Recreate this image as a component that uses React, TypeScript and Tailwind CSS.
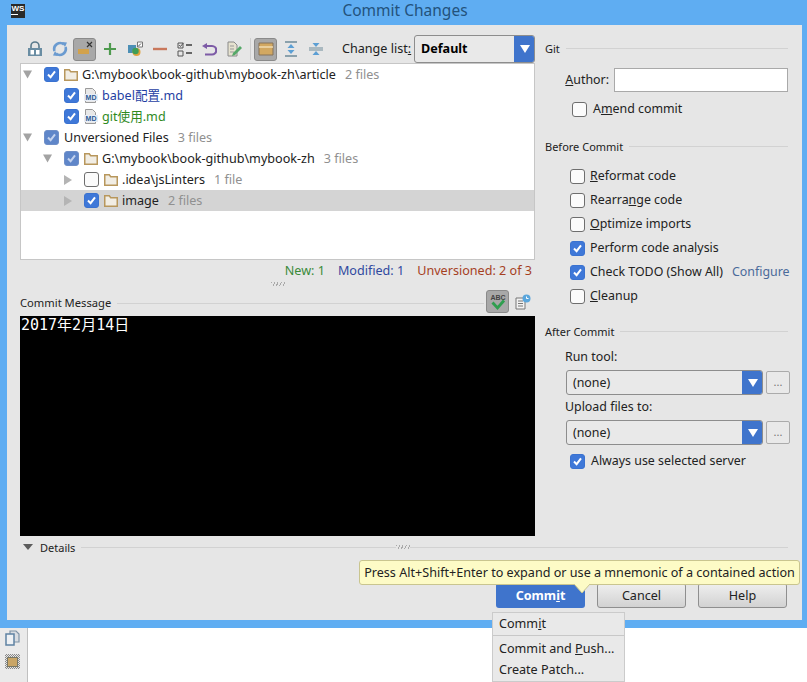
import React from 'react'

const Check = ({ on = false, muted = false }: { on?: boolean; muted?: boolean }) => (
  <span
    className={`flex h-[15px] w-[15px] shrink-0 items-center justify-center rounded-[3px] border ${
      on ? (muted ? 'border-[#6f8fc8] bg-[#5f86c9]' : 'border-[#3a72d0] bg-[#3f78d8]') : 'border-[#6e6e6e] bg-[#fbfbfb]'
    }`}
  >
    {on && (
      <svg width="11" height="11" viewBox="0 0 11 11">
        <path d="M2 5.5 L4.6 8.2 L9 2.4" fill="none" stroke={muted ? '#c3d2ee' : '#fff'} strokeWidth="2" />
      </svg>
    )}
  </span>
)

const Folder = () => (
  <svg width="14" height="12" viewBox="0 0 14 12" className="shrink-0">
    <path d="M.75 11.25V.75h4.5l1.5 2h6.5v8.5z" fill="#f1ede4" stroke="#b8975c" strokeWidth="1.5" />
  </svg>
)

const MdFile = () => (
  <svg width="14" height="16" viewBox="0 0 14 16" className="shrink-0">
    <path d="M1.5.5h7l3 3v11h-10z" fill="#e8e8e8" stroke="#9a9a9a" />
    <rect x="0" y="6" width="14" height="7" fill="#e6ecf5" />
    <text x="7" y="12.2" textAnchor="middle" fontSize="7" fontWeight="700" fill="#2c5a94" fontFamily="Liberation Sans">MD</text>
  </svg>
)

const Arrow = ({ dir }: { dir?: 'down' | 'right' }) => (
  <span className="flex w-[9px] shrink-0 justify-center">
    {dir === 'down' && (
      <svg width="10" height="9" viewBox="0 0 10 9"><path d="M0 0h10L5 9z" fill="#a3a3a3" /></svg>
    )}
    {dir === 'right' && (
      <svg width="8" height="10" viewBox="0 0 8 10"><path d="M0 0l8 5-8 5z" fill="#b4b4b4" /></svg>
    )}
  </span>
)

function TreeRow({
  depth,
  dir,
  on,
  muted,
  icon,
  label,
  labelClass = 'text-[#222]',
  count,
  selected,
}: {
  depth: number
  dir?: 'down' | 'right'
  on?: boolean
  muted?: boolean
  icon?: 'folder' | 'md'
  label: string
  labelClass?: string
  count?: string
  selected?: boolean
}) {
  const indent = ['pl-[2px]', 'pl-[22px]', 'pl-[42px]'][depth]
  return (
    <div className={`flex h-[21px] items-center ${indent} ${selected ? 'bg-[#d4d4d4]' : ''}`}>
      <Arrow dir={dir} />
      <span className="ml-[12px]">
        <Check on={on} muted={muted} />
      </span>
      {icon && <span className="ml-[5px] mr-[4px] flex w-[14px] justify-center">{icon === 'folder' ? <Folder /> : <MdFile />}</span>}
      <span className={`whitespace-nowrap pt-px ${icon ? '' : 'ml-[5px]'} ${labelClass}`}>{label}</span>
      {count && <span className="ml-[9px] whitespace-nowrap pt-px text-[#909090]">{count}</span>}
    </div>
  )
}

const Tool = ({ children, active }: { children: React.ReactNode; active?: boolean }) => (
  <span className="flex h-[28px] w-[25px] shrink-0 items-center justify-center">
    <span className={`flex h-[23px] w-[23px] items-center justify-center rounded-[3px] ${active ? 'border border-[#8a8a8a] bg-[#a8a8a8]' : ''}`}>
      {children}
    </span>
  </span>
)

const Combo = ({ label, bold, h }: { label: string; bold?: boolean; h: string }) => (
  <div className={`flex ${h} flex-1 overflow-hidden rounded-[3px] border border-[#8d8d8d] bg-[#e9e9e9]`}>
    <span className={`flex flex-1 items-center pl-[6px] ${bold ? 'font-bold text-black' : 'pt-px text-[#222]'}`}>{label}</span>
    <span className="-my-px -mr-px flex w-[21px] items-center justify-center rounded-r-[3px] bg-[#3f74cc]">
      <svg width="10" height="8" viewBox="0 0 10 8"><path d="M0 0h10L5 8z" fill="#fff" /></svg>
    </span>
  </div>
)

const Option = ({ on, children, extra }: { on?: boolean; children: React.ReactNode; extra?: React.ReactNode }) => (
  <div className="flex h-[24px] items-center pl-[25px]">
    <Check on={on} />
    <span className="ml-[5px] whitespace-nowrap text-[#222]">{children}</span>
    {extra}
  </div>
)

const GroupTitle = ({ children }: { children: React.ReactNode }) => (
  <div className="flex h-[16px] items-center gap-[6px] pr-[2px] text-[11px] text-[#222]">
    <span className="whitespace-nowrap">{children}</span>
    <span className="h-px flex-1 bg-[#d2d2d2]" />
  </div>
)

const DotsButton = () => (
  <span className="ml-[3px] flex h-[23px] w-[24px] items-center justify-center rounded-[2px] border border-[#ababab] bg-[#e9e9e9] pb-[2px] text-[11px] text-[#777]">
    ...
  </span>
)

const Grip = () => (
  <span className="h-[4px] w-[14px] bg-[repeating-linear-gradient(115deg,#a9a9a9_0_1px,transparent_1px_3px)]" />
)

const GrayButton = ({ children }: { children: React.ReactNode }) => (
  <span className="flex h-[25px] w-[89px] items-center justify-center rounded-[3px] border border-[#8f8f8f] bg-gradient-to-b from-[#efefef] to-[#d2d2d2] pt-px text-[#222]">
    {children}
  </span>
)

export default function App() {
  return (
    <div className="relative flex h-[682px] w-[807px] flex-col overflow-hidden bg-white font-['Noto_Sans','Noto_Sans_CJK_SC',sans-serif] text-[12.6px] leading-none">
      {/* 窗口 */}
      <div className="flex h-[628px] flex-col bg-[#5fadf2] pb-[8px] pl-[7px] pr-[5px]">
        <div className="flex h-[25px] shrink-0 items-center">
          <span className="mb-[4px] ml-[4px] flex h-[14px] w-[14px] flex-col items-center bg-[#2a2a2a] pt-[1px] font-['Liberation_Sans',sans-serif] text-[8px] font-bold text-white">
            WS
            <span className="mt-[1px] h-px w-[7px] self-start bg-white" />
          </span>
          <span className="flex-1 pb-[3px] pr-[17px] text-center text-[15.5px] text-[#23527c]">Commit Changes</span>
        </div>

        <div className="flex min-h-0 flex-1 flex-col bg-[#e6e6e6]">
          <div className="flex h-[511px] shrink-0 pl-[13px]">
            {/* 左侧 */}
            <div className="flex w-[515px] shrink-0 flex-col pt-[10px]">
              <div className="flex h-[28px] items-center pl-[2px]">
                <Tool>
                  <svg width="16" height="16" viewBox="0 0 16 16">
                    <path d="M4 7V5a4 4 0 018 0v2" fill="none" stroke="#5a7a8c" strokeWidth="1.6" />
                    <path d="M1 7h14v8H1z" fill="#6a8da3" />
                    <path d="M3.5 9h3.5v4.5H3.500zM9 9h3.500v4.500H9z" fill="#fff" />
                  </svg>
                </Tool>
                <Tool>
                  <svg width="16" height="16" viewBox="0 0 16 16">
                    <path d="M12 3.500A6 6 0 002.500 10M4 12.500A6 6 0 0013.500 6" fill="none" stroke="#6b9bd0" strokeWidth="2.600" />
                    <path d="M10 1l5 .5-2 4.500zM6 15l-5-.5 2-4.500z" fill="#6b9bd0" />
                  </svg>
                </Tool>
                <Tool active>
                  <svg width="18" height="18" viewBox="0 0 18 18">
                    <path d="M2 9h11v5H2z" fill="#d2a24c" />
                    <path d="M11 2l5 5M16 2l-5 5" stroke="#333" strokeWidth="1.200" />
                  </svg>
                </Tool>
                <Tool>
                  <svg width="14" height="14" viewBox="0 0 14 14"><path d="M7 1v12M1 7h12" stroke="#4e9a4e" strokeWidth="2.200" /></svg>
                </Tool>
                <Tool>
                  <svg width="16" height="16" viewBox="0 0 16 16">
                    <path d="M1 4h8v8H1z" fill="#4c8fb5" />
                    <circle cx="9.500" cy="11" r="4" fill="#e0a23c" />
                    <circle cx="8.500" cy="10" r="3.200" fill="#3f9e55" />
                    <path d="M10.500 1h5v5h-5z" fill="#fff" stroke="#777" />
                    <path d="M11 5.500l3-3" stroke="#555" />
                  </svg>
                </Tool>
                <Tool>
                  <svg width="14" height="4" viewBox="0 0 14 4"><path d="M0 2h14" stroke="#c9785c" strokeWidth="2.400" /></svg>
                </Tool>
                <Tool>
                  <svg width="15" height="15" viewBox="0 0 15 15">
                    <path d="M1 1h5v5H1zM1 9h5v5H1z" fill="none" stroke="#555" />
                    <path d="M2.200 3l1.300 1.500L6.500 .8" fill="none" stroke="#555" />
                    <path d="M9 3h6M9 11h6" stroke="#666" strokeWidth="2" />
                  </svg>
                </Tool>
                <Tool>
                  <svg width="15" height="13" viewBox="0 0 15 13">
                    <path d="M3 3h7a3.800 3.800 0 010 8.500H3" fill="none" stroke="#7d5ba6" strokeWidth="2.200" />
                    <path d="M0 3l5-3v6z" fill="#7d5ba6" />
                  </svg>
                </Tool>
                <Tool>
                  <svg width="15" height="16" viewBox="0 0 15 16">
                    <path d="M1 1h6l3 3v11H1z" fill="#e6e2cf" stroke="#8a8a8a" />
                    <path d="M3 5h4M3 8h4M3 11h4" stroke="#999" />
                    <path d="M6 12l7-7 2 2-7 7-3 1z" fill="#55a868" />
                  </svg>
                </Tool>
                <span className="ml-[3px] mr-[2px] h-[22px] w-px bg-[#cfcfcf]" />
                <Tool active>
                  <svg width="16" height="14" viewBox="0 0 16 14">
                    <path d="M1 1h14v12H1z" fill="#d2a861" stroke="#85735a" />
                    <path d="M1 5h14" stroke="#f0dcb2" strokeWidth="1.500" />
                  </svg>
                </Tool>
                <Tool>
                  <svg width="14" height="16" viewBox="0 0 14 16">
                    <path d="M1 1h12M1 15h12" stroke="#6e8b99" strokeWidth="1.500" />
                    <path d="M7 3l3.500 4h-7zM7 13l3.500-4h-7z" fill="#5c9fd4" />
                  </svg>
                </Tool>
                <Tool>
                  <svg width="14" height="16" viewBox="0 0 14 16">
                    <path d="M0 7h14M0 9h14" stroke="#6e8b99" />
                    <path d="M7 6l3.500-4h-7zM7 10l3.500 4h-7z" fill="#5c9fd4" />
                  </svg>
                </Tool>
                <span className="ml-[14px] w-[72px] whitespace-nowrap text-[#222]">
                  Change list<span className="underline">:</span>
                </span>
                <Combo label="Default" bold h="h-[28px]" />
              </div>

              <div className="h-[197px] shrink-0 border border-[#c6c6c6] bg-white">
                <TreeRow depth={0} dir="down" on icon="folder" label={'G:\\mybook\\book-github\\mybook-zh\\article'} count="2 files" />
                <TreeRow depth={1} on icon="md" label="babel配置.md" labelClass="text-[#1f3fa3]" />
                <TreeRow depth={1} on icon="md" label="git使用.md" labelClass="text-[#2f8a1e]" />
                <TreeRow depth={0} dir="down" on muted label="Unversioned Files" count="3 files" />
                <TreeRow depth={1} dir="down" on muted icon="folder" label={'G:\\mybook\\book-github\\mybook-zh'} count="3 files" />
                <TreeRow depth={2} dir="right" icon="folder" label={'.idea\\jsLinters'} count="1 file" />
                <TreeRow depth={2} dir="right" on icon="folder" label="image" count="2 files" selected />
              </div>

              <div className="flex h-[21px] shrink-0 items-center justify-end gap-[13px] pr-[3px] pt-px">
                <span className="text-[#3a8a3a]">New: 1</span>
                <span className="text-[#30499f]">Modified: 1</span>
                <span className="text-[#a5401f]">Unversioned: 2 of 3</span>
              </div>
              <div className="flex h-[6px] shrink-0 items-center justify-center">
                <Grip />
              </div>

              <div className="flex h-[29px] shrink-0 items-end">
                <span className="mb-[8px] whitespace-nowrap text-[11.2px] text-[#222]">Commit Message</span>
                <span className="mb-[12px] ml-[6px] h-px flex-1 bg-[#d2d2d2]" />
                <span className="mb-[3px] ml-[2px] flex h-[23px] w-[23px] items-center justify-center rounded-[3px] border border-[#8a8a8a] bg-[#a8a8a8]">
                  <svg width="18" height="18" viewBox="0 0 18 18">
                    <text x="9" y="7" textAnchor="middle" fontSize="7" fontWeight="700" fill="#444" fontFamily="Liberation Sans">ABC</text>
                    <path d="M3.500 9.500L8.500 15 15 7.500" fill="none" stroke="#2f9e4f" strokeWidth="2.800" />
                  </svg>
                </span>
                <span className="mb-[6px] ml-[6px] mr-[4px]">
                  <svg width="16" height="16" viewBox="0 0 16 16">
                    <path d="M1 4h9v11H1z" fill="#f2f2f2" stroke="#777" />
                    <path d="M3 7h5M3 9.500h5M3 12h5" stroke="#777" />
                    <circle cx="11.500" cy="4.500" r="4" fill="#5aa6dc" />
                    <path d="M11.500 2.500v2h2" fill="none" stroke="#fff" />
                  </svg>
                </span>
              </div>

              <div className="flex-1 bg-black px-px pt-[1px] font-['DejaVu_Sans_Mono','Noto_Sans_CJK_SC',monospace] text-[15px] leading-[17px] text-white">
                2017年2月14日
              </div>
            </div>

            {/* 右侧 */}
            <div className="ml-[10px] flex w-[245px] shrink-0 flex-col pt-[15px] text-[12.4px]">
              <GroupTitle>Git</GroupTitle>
              <div className="mt-[12px] flex h-[24px] items-center justify-end pr-[2px]">
                <span className="mr-[5px] text-[#222]">
                  <span className="underline">A</span>uthor:
                </span>
                <span className="h-[24px] w-[174px] border border-[#a9a9a9] bg-white" />
              </div>
              <div className="mt-[5px] flex h-[24px] items-center pl-[27px]">
                <Check />
                <span className="ml-[6px] text-[#222]">
                  A<span className="underline">m</span>end commit
                </span>
              </div>
              <div className="mt-[17px]">
                <GroupTitle>Before Commit</GroupTitle>
              </div>
              <div className="mt-[10px]">
                <Option><span className="underline">R</span>eformat code</Option>
                <Option>Rearra<span className="underline">n</span>ge code</Option>
                <Option><span className="underline">O</span>ptimize imports</Option>
                <Option on>Perform code analysis</Option>
                <Option on extra={<span className="ml-[9px] whitespace-nowrap text-[#4a6a9a]">Configure</span>}>
                  Check TODO (Show All)
                </Option>
                <Option><span className="underline">C</span>leanup</Option>
              </div>
              <div className="mt-[15px]">
                <GroupTitle>After Commit</GroupTitle>
              </div>
              <div className="mt-[10px] flex h-[16px] items-center pl-[20px] text-[#222]">Run tool:</div>
              <div className="mt-[5px] flex items-center pl-[21px]">
                <Combo label="(none)" h="h-[25px]" />
                <DotsButton />
              </div>
              <div className="mt-[4px] flex h-[17px] items-center pl-[20px] text-[#222]">Upload files to:</div>
              <div className="mt-[4px] flex items-center pl-[21px]">
                <Combo label="(none)" h="h-[25px]" />
                <DotsButton />
              </div>
              <div className="mt-[4px] flex h-[24px] items-center pl-[25px]">
                <Check on />
                <span className="ml-[6px] text-[#222]">Always use selected server</span>
              </div>
            </div>
          </div>

          <div className="flex h-[24px] shrink-0 items-center pb-[2px] pl-[16px] pr-[14px]">
            <svg width="10" height="6" viewBox="0 0 10 6"><path d="M0 0h10L5 6z" fill="#5c5c5c" /></svg>
            <span className="ml-[7px] mr-[6px] text-[11px] text-[#222]">Details</span>
            <span className="h-px flex-1 bg-[#d2d2d2]" />
            <Grip />
            <span className="h-px flex-[1.2] bg-[#d2d2d2]" />
          </div>

          <div className="mt-[23px] flex justify-end gap-[12px] pr-[15px]">
            <span className="flex h-[25px] w-[89px] items-center justify-center rounded-[3px] bg-[#3f74cc] pt-px font-bold text-white">
              Comm<span className="underline">i</span>t
            </span>
            <GrayButton>Cancel</GrayButton>
            <GrayButton>Help</GrayButton>
          </div>
        </div>
      </div>

      {/* 底部 */}
      <div className="flex min-h-0 flex-1">
        <div className="flex w-[28px] flex-col items-start gap-[8px] border-r border-[#c0c0c0] bg-[#eaeaea] pl-[5px] pt-[2px]">
          <svg width="15" height="16" viewBox="0 0 15 16">
            <path d="M5 1h6l3 3v8H5z" fill="#d9dde2" stroke="#7f93a6" strokeWidth="1.200" />
            <path d="M1 4h8v11H1z" fill="#eef1f4" stroke="#5f82a3" strokeWidth="1.500" />
          </svg>
          <span className="flex h-[15px] w-[15px] items-center justify-center bg-[repeating-conic-gradient(#888_0_25%,#e6e6e6_0_50%)] bg-[length:2px_2px]">
            <span className="h-[10px] w-[11px] border border-[#776] bg-[#c9a566]" />
          </span>
        </div>
      </div>

      {/* 提示 */}
      <div className="absolute left-[359px] top-[560px] flex h-[25px] w-[441px] items-center justify-center whitespace-nowrap rounded-[3px] border border-[#c9c58f] bg-[#fdfbc6] pt-px text-[#222]">
        Press Alt+Shift+Enter to expand or use a mnemonic of a contained action
      </div>
      <svg width="16" height="9" viewBox="0 0 16 9" className="absolute left-[574px] top-[584px]">
        <path d="M0 0h16L8 9z" fill="#fdfbc6" />
        <path d="M0 0L8 9 16 0" fill="none" stroke="#c9c58f" />
      </svg>

      {/* 菜单 */}
      <div className="absolute left-[492px] top-[612px] h-[70px] w-[133px] border border-[#cbcbcb] bg-[#e9e9e9] text-[#222]">
        <div className="flex h-[22px] items-center pl-[6px]">
          Comm<span className="underline">i</span>t
        </div>
        <div className="h-px bg-[#c8c8c8]" />
        <div className="flex h-[25px] items-center whitespace-pre pl-[6px] pt-px">
          Commit and <span className="underline">P</span>ush...
        </div>
        <div className="flex h-[18px] items-center pl-[6px] pt-px">Create Patch...</div>
      </div>
    </div>
  )
}
